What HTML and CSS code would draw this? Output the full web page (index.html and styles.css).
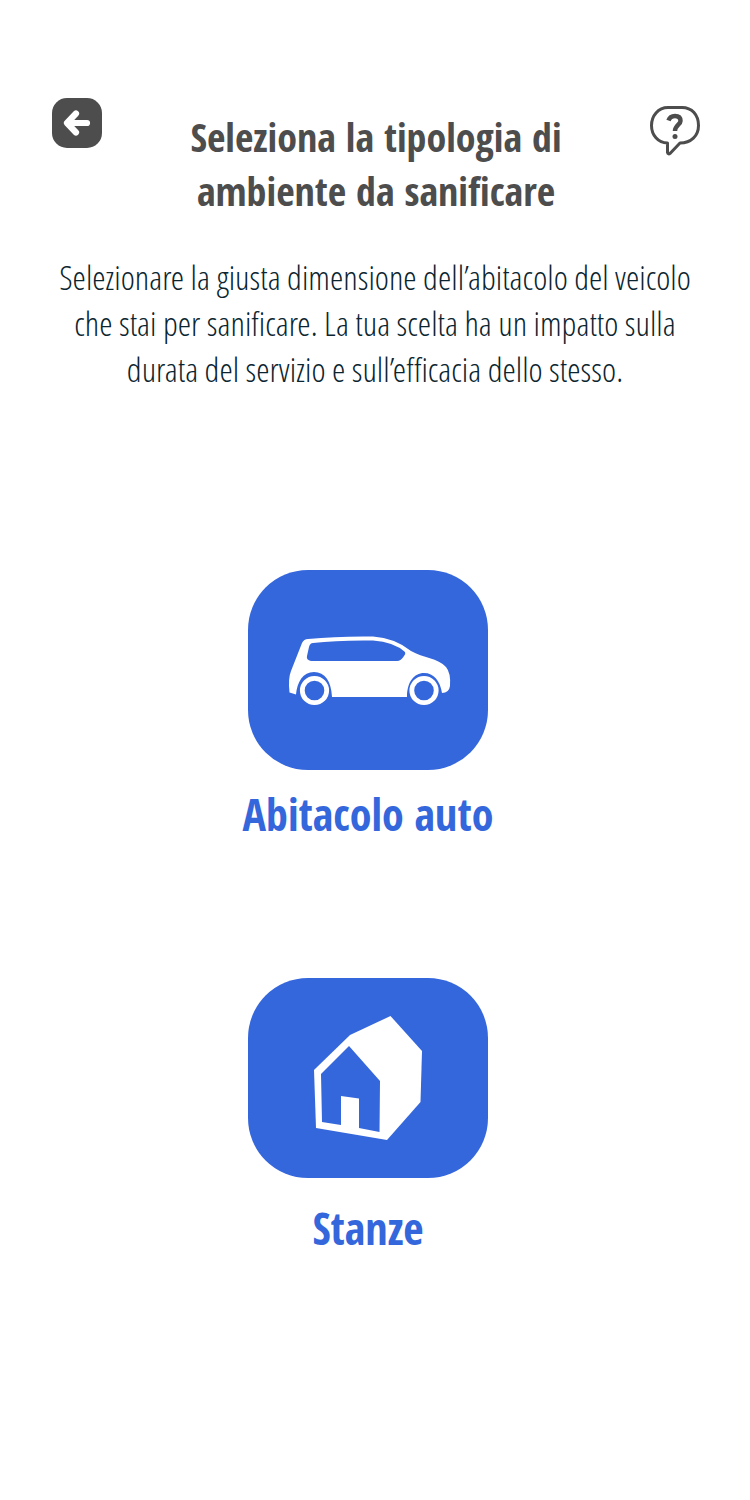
FILE: index.html
```html
<!DOCTYPE html>
<html lang="it">
<head>
  <meta charset="UTF-8">
  <meta name="viewport" content="width=device-width, initial-scale=1">
  <title>Seleziona ambiente</title>
  <link rel="stylesheet" href="styles.css">
</head>
<body>
  <header class="topbar">
    <button class="icon-button" type="button" aria-label="Indietro">
      <svg viewBox="0 0 50 50">
        <rect width="50" height="50" rx="15" fill="#4d4d4d"/>
        <path d="M24 15.500 15 25 24 34.500M16 25H35" fill="none" stroke="#fff" stroke-width="6.200" stroke-linecap="round" stroke-linejoin="round"/>
      </svg>
    </button>
    <h1 class="title">Seleziona la tipologia di ambiente da sanificare</h1>
    <button class="icon-button help" type="button" aria-label="Aiuto">
      <svg viewBox="0 0 50 50">
        <path d="M18 1.500H32C42 1.500 48.500 9 48.500 19.500S41 37 30 37L20.500 47Q18 49 17.500 46.500V37C8 37 1.500 29 1.500 19.500S8 1.500 18 1.500Z" fill="none" stroke="#4d4d4d" stroke-width="3" stroke-linejoin="round"/>
        <path d="M18.500 14.500Q20 10 25 10C29.500 10 30.500 12.500 30.500 15 30.500 18.500 25 19 25 25" fill="none" stroke="#4d4d4d" stroke-width="4.500"/>
        <circle cx="25" cy="30.500" r="2.500" fill="#4d4d4d"/>
      </svg>
    </button>
  </header>

  <main>
    <p class="intro">Selezionare la giusta dimensione dell’abitacolo del veicolo che stai per sanificare. La tua scelta ha un impatto sulla durata del servizio e sull’efficacia dello stesso.</p>

    <div class="options">
      <button class="option" type="button">
        <span class="tile">
          <svg viewBox="0 0 240 200">
            <path fill="#fff" d="M48 124.500 41.500 122.500Q40 108 43 101L54 73Q56 69 60 69Q90 66 125 66.500Q147 68 163 81C175 88 190 88 198 97Q203 103 202 116Q201 123 194 123C192 111 186 103 176 103C166 103 159 112 159 127H84C83 111 77 102 66 102C55 102 49 112 48 124.500Z"/>
            <path fill="#3466dc" d="M65 73Q90 70 125 70.500Q146 72 157 82Q158 84 156 86 153 91 149 91H63Q58 90 59 86L61 77Q62 73 65 73Z"/>
            <circle cx="66.500" cy="120.500" r="12.200" fill="none" stroke="#fff" stroke-width="4.800"/>
            <circle cx="176" cy="120.500" r="12.200" fill="none" stroke="#fff" stroke-width="4.800"/>
          </svg>
        </span>
        <span class="label">Abitacolo auto</span>
      </button>

      <button class="option rooms" type="button">
        <span class="tile">
          <svg viewBox="0 0 240 200">
            <path fill="#fff" d="M142.500 38 174 73 172.500 124 139 162 68 150 66 92 102 57Z"/>
            <path fill="#3466dc" d="M101 68 132 103 131.500 154 111 150V120.500L93 118 93 147 74 144 73 96Z"/>
          </svg>
        </span>
        <span class="label">Stanze</span>
      </button>
    </div>
  </main>
</body>
</html>
```
FILE: styles.css
```css
* {
  box-sizing: border-box;
}
body {
  margin: 0;
  background: #fff;
  color: #4d4d4d;
  font-family: "Open Sans Condensed", "Open Sans", sans-serif;
}
button {
  padding: 0;
  border: 0;
  background: none;
  font-family: inherit;
  cursor: pointer;
}
svg {
  display: block;
  width: 100%;
}
.topbar {
  display: flex;
  align-items: flex-start;
  justify-content: space-between;
  padding: 98px 50px 0 52px;
}
.icon-button {
  flex: none;
  width: 50px;
}
.help {
  margin-top: 8px;
}
.title {
  max-width: 400px;
  margin: 12px 0 0;
  font-size: 40px;
  line-height: 54px;
  font-weight: 700;
  text-align: center;
}
.intro {
  margin: 36px 50px 0;
  color: #0b2530;
  font-family: "Open Sans Condensed Light", "Open Sans Light Condensed", "Open Sans Cond Light", "OpenSans-CondensedLight", "OpenSans-CondLight", "Open Sans Condensed", sans-serif;
  font-size: 34px;
  line-height: 46px;
  font-weight: 300;
  text-align: center;
}
.options {
  display: flex;
  flex-direction: column;
  align-items: center;
  gap: 134px;
  padding: 178px 64px 80px 50px;
}
.option {
  display: flex;
  flex-direction: column;
  align-items: center;
  gap: 14px;
}
.rooms {
  gap: 20px;
}
.tile {
  width: 240px;
  border-radius: 60px;
  background: #3466dc;
}
.label {
  color: #3466dc;
  font-size: 44px;
  line-height: 60px;
  font-weight: 700;
}
```
